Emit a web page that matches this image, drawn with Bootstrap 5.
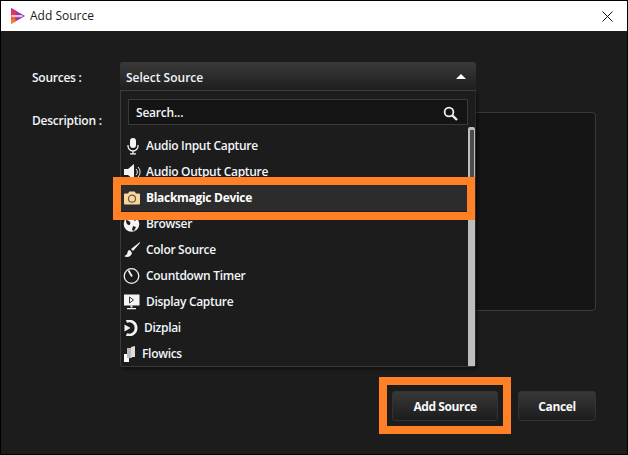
<!doctype html>
<html lang="en"><head><meta charset="utf-8"><title>Add Source</title>
<link href="https://cdn.jsdelivr.net/npm/bootstrap@5.3.0/dist/css/bootstrap.min.css" rel="stylesheet">
<style>
html,body{height:100%;overflow:hidden;background:#1c1c1c}
body{font:600 12px/16px "Open Sans",sans-serif;color:#f2f6fa}
.win{width:628px;height:455px;border:1px solid #000}
.ttl{height:30px;background:#fff;color:#1a1a1a;font-weight:400;padding:0 14px 0 9px;gap:5px}
.ttl svg{flex:none}
.wbody{background:#1c1c1c;padding:31px 31px 0 31px}
.lbl{width:88px;flex:none;letter-spacing:-.25px}
.rowa{height:29px}
.rowa>.lbl{padding-top:3px}
.rowb{height:199px;margin-top:21px}
.rowb>.lbl{padding-top:1px}
.sel{position:relative;width:356px;height:29px;padding:0 10px 0 6px;background:linear-gradient(#3a3a3a,#1e1e1e);border-radius:3px 3px 0 0;border-bottom:1px solid #3e3e3e}
.seltxt{padding-top:3px}
.caret{width:0;height:0;border:5px solid transparent;border-top:0;border-bottom:5px solid #fff}
.menu{position:absolute;left:0;top:29px;width:356px;height:276px;background:#1c1c1c;border:1px solid #3a3a3a;border-top:0;border-right:1px solid #2a2a2a;box-shadow:2px 2px 3px rgba(0,0,0,.45);z-index:5;border-radius:0 0 3px 3px;padding:8px 7px 0 7px}
.srch{height:26px;background:#141414;border:1px solid #3a3a3a;padding:2px 9px 0 7px;letter-spacing:-.2px}
.lst{list-style:none;margin:8px 0 0;padding:0;letter-spacing:-.3px}
.itm{height:26px;position:relative}
.itm svg{flex:none;margin-left:-5px}
.itm span{white-space:nowrap;margin-left:5px}
.itm .mic{margin-left:-4px}
.itm .mic+span{margin-left:4px}
.act{background:#2c2c2c;color:#fff;font-weight:700;margin:0 0 0 -7px;padding-left:7px;height:26px}
.act::after{content:"";position:absolute;left:-8px;right:-7px;top:-8px;bottom:-9px;border:8px solid #ff8025;pointer-events:none;z-index:2}
.scr{position:absolute;right:0;top:36px;bottom:0;width:7px;background:#bdbdbd;z-index:1;border-radius:2px 2px 0 0}
.scr::before{content:"";position:absolute;left:2px;right:1px;top:3px;height:90px;background:#4c4c4c}
.txa{flex:none;width:476px;height:199px;background:#151515;border:1px solid #3a3a3a;border-radius:4px}
.foot{margin-top:80px;gap:20px}
.bt{height:30px;background:linear-gradient(#383838,#1c1c1c);border:1px solid #333;border-radius:3px;color:#f6f8fb;font:700 12px/16px "Open Sans",sans-serif;padding:2px 0 0;letter-spacing:-.4px}
.b1{width:106px;position:relative}
.b2{width:78px}
.b1::after{content:"";position:absolute;left:-14px;right:-14px;top:-15px;bottom:-14px;border:8px solid #ff8025}
</style></head><body>
<div class="win d-flex flex-column">
 <div class="ttl d-flex align-items-center">
  <svg width="15" height="16" viewBox="0 0 15 16"><defs><linearGradient id="g" x1="0" y1="0" x2="0" y2="1"><stop offset="0" stop-color="#d81f9f"/><stop offset=".5" stop-color="#e8403a"/><stop offset="1" stop-color="#f7a41c"/></linearGradient><linearGradient id="h" x1="0" y1="0" x2="1" y2="0"><stop offset="0" stop-color="#c52a8f"/><stop offset="1" stop-color="#6d3fc4"/></linearGradient></defs><path d="M1 0 L15 8 L1 16Z" fill="url(#h)"/><path d="M1 0 L5.500 2.600 V13.400 L1 16Z" fill="url(#g)"/><rect x="1.500" y="7" width="11" height="2.200" fill="#f8d8e4" opacity=".85"/></svg>
  <span>Add Source</span>
  <svg class="ms-auto" width="11" height="11" viewBox="0 0 11 11"><path d="M.5.5l10 10M10.500.5l-10 10" stroke="#111" stroke-width="1" fill="none"/></svg>
 </div>
 <div class="wbody flex-grow-1">
  <div class="d-flex align-items-center rowa">
   <div class="lbl">Sources :</div>
   <div class="sel d-flex align-items-center justify-content-between">
    <span class="seltxt">Select Source</span><i class="caret"></i>
    <div class="menu">
     <div class="srch d-flex align-items-center justify-content-between"><span>Search...</span>
      <svg width="15" height="15" viewBox="0 0 15 15"><circle cx="6" cy="6" r="4.400" fill="none" stroke="#eee" stroke-width="1.800"/><path d="M9.300 9.300L14 14" stroke="#eee" stroke-width="2.400"/></svg></div>
     <ul class="lst">
      <li class="itm d-flex align-items-center"><svg class="mic" width="18" height="18" viewBox="0 0 18 18"><rect x="6" y="1" width="6" height="10" rx="3" fill="#f4f4f4"/><path d="M4 8v1a5 5 0 0010 0V8M9 14v2.500M6 16.800h6" stroke="#f4f4f4" stroke-width="1.300" fill="none"/></svg><span>Audio Input Capture</span></li>
      <li class="itm d-flex align-items-center"><svg width="18" height="18" viewBox="0 0 18 18"><path d="M1 6h4l6-5v16l-6-5H1z" fill="#f4f4f4"/><path d="M13 6a4 4 0 010 6M15 4a7 7 0 010 10" stroke="#f4f4f4" fill="none"/></svg><span>Audio Output Capture</span></li>
      <li class="itm act d-flex align-items-center"><svg width="18" height="16" viewBox="0 0 18 16"><path d="M1 4.500a1 1 0 011-1h3l1.300-2h5.400l1.300 2h3a1 1 0 011 1v9a1 1 0 01-1 1H2a1 1 0 01-1-1z" fill="#f9d6a0"/><circle cx="9" cy="8.700" r="3.500" fill="none" stroke="#6d5a3d" stroke-width="1.200"/></svg><span>Blackmagic Device</span></li>
      <li class="itm d-flex align-items-center"><svg width="18" height="18" viewBox="0 0 18 18"><circle cx="8.500" cy="9" r="7.800" fill="#f4f4f4"/><path d="M3 5c2 0 3 1 4 2s0 3-1 3-3-1-3-5zM10 11l3 1-2 4-2-1zM10 2l4 2-2 2-3-2z" fill="#1c1c1c"/></svg><span>Browser</span></li>
      <li class="itm d-flex align-items-center"><svg width="18" height="18" viewBox="0 0 18 18"><path d="M17 1L8 8l2 2 7-8zM7 9c-3 0-2 3-3 4s-2 2-3 2c3 2 7 1 8-3z" fill="#f4f4f4"/></svg><span>Color Source</span></li>
      <li class="itm d-flex align-items-center"><svg width="18" height="18" viewBox="0 0 18 18"><circle cx="8.500" cy="9" r="7.300" fill="none" stroke="#f4f4f4" stroke-width="1.300"/><path d="M5.500 3.500L9 9.500" stroke="#f4f4f4" stroke-width="1.800"/></svg><span>Countdown Timer</span></li>
      <li class="itm d-flex align-items-center"><svg width="18" height="18" viewBox="0 0 18 18"><path d="M1 1.500h15.500v11H1z" fill="#f4f4f4"/><path d="M6.500 4l4 3-4 3z" fill="none" stroke="#333"/><path d="M7.500 12.500h2v2h-2zM4 15h9v1.300H4z" fill="#f4f4f4"/></svg><span>Display Capture</span></li>
      <li class="itm d-flex align-items-center"><svg width="16" height="16" viewBox="0 0 16 16"><path d="M3.500 1.500a7 7 0 110 13" fill="none" stroke="#f4f4f4" stroke-width="2.800"/><path d="M1.500 4.500l6 3.500-6 3.500z" fill="#f4f4f4"/></svg><span>Dizplai</span></li>
      <li class="itm d-flex align-items-center"><svg width="14" height="18" viewBox="0 0 14 18"><path d="M1 9h5v8H1z" fill="#fff"/><path d="M4 3h5v10H4z" fill="#bbb"/><path d="M8 2l4-1v11H8z" fill="#ddd"/></svg><span>Flowics</span></li>
     </ul>
     <div class="scr"></div>
    </div>
   </div>
  </div>
  <div class="d-flex rowb">
   <div class="lbl">Description :</div>
   <div class="txa"></div>
  </div>
  <div class="foot d-flex justify-content-end">
   <button class="bt b1">Add Source</button><button class="bt b2">Cancel</button>
  </div>
 </div>
</div>
</body></html>
